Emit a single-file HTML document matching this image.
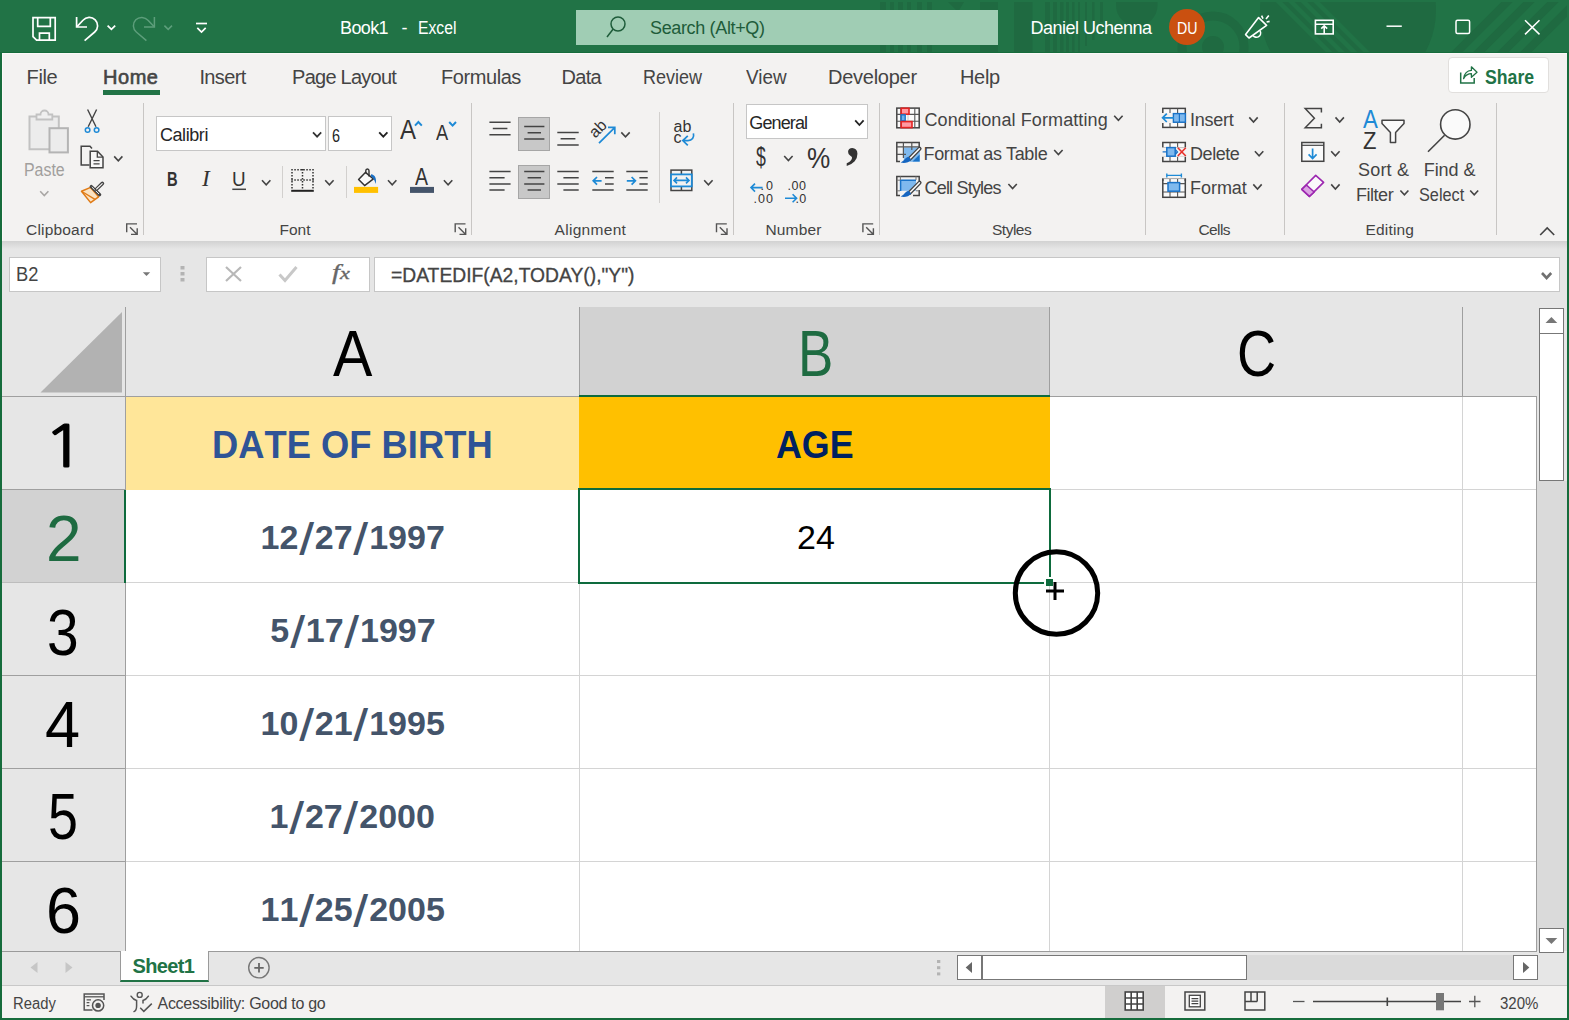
<!DOCTYPE html>
<html lang="en">
<head>
<meta charset="utf-8">
<title>Book1 - Excel</title>
<style>
html,body{margin:0;padding:0;}
body{width:1569px;height:1020px;overflow:hidden;background:#e6e6e6;font-family:"Liberation Sans",sans-serif;color:#444;}
#win{position:absolute;left:0;top:0;width:1569px;height:1020px;overflow:hidden;background:#e6e6e6;}
.abs{position:absolute;}
.t{position:absolute;white-space:nowrap;line-height:1;font-size:18px;color:#444;}
.b{font-weight:bold;}
.w{color:#fff;}
.g{color:#217346;}
svg.ov{position:absolute;left:0;top:0;width:1569px;height:1020px;overflow:visible;}
/* regions */
#title{left:0;top:0;width:1569px;height:53px;background:#217346;}
#ribbon{left:2px;top:53px;width:1565px;height:188px;background:#f3f2f1;box-sizing:border-box;border-top:1px solid #fbf9f8;border-left:1px solid #fbf9f8;}
#shadow{left:2px;top:241px;width:1565px;height:8px;background:linear-gradient(#d2d2d2,#e6e6e6);}
#bl{left:0;top:52px;width:2px;height:968px;background:#166c3c;}
#br{left:1567px;top:52px;width:2px;height:968px;background:#166c3c;}
#bb{left:0;top:1018px;width:1569px;height:2px;background:#166c3c;}
.box{position:absolute;background:#fff;border:1px solid #c6c6c6;box-sizing:border-box;}
.sep{position:absolute;width:1px;background:#c8c6c4;}
/* grid */
.hl{position:absolute;height:1px;background:#d4d4d4;}
.vl{position:absolute;width:1px;background:#d4d4d4;}
.cell{position:absolute;}
.hdr{position:absolute;color:#000;line-height:1;white-space:nowrap;font-size:65px;transform-origin:0 0;}
.dt{font-kerning:none;position:absolute;white-space:nowrap;line-height:1;font-weight:bold;color:#44546a;font-size:34px;}
.sl{display:inline-block;width:16.5px;text-align:center;font-size:34px;line-height:0;vertical-align:-1px;letter-spacing:0;}
.sl i{display:inline-block;font-style:normal;transform:skewX(-9deg) scale(1.1,1.3);transform-origin:50% 0;}
</style>
</head>
<body>
<div id="win">
<!--TITLE-->
<div class="abs" id="title"></div>
<svg class="ov" viewBox="0 0 1569 1020">
<defs><clipPath id="tc"><rect x="0" y="2" width="1567" height="51"/></clipPath><clipPath id="dc"><circle cx="1348" cy="10" r="88"/></clipPath></defs>
<g clip-path="url(#tc)" fill="#1f6a41">
<rect x="880" y="2" width="6" height="51"/><rect x="890" y="2" width="4" height="51"/><rect x="898" y="2" width="5" height="51"/><rect x="907" y="2" width="4" height="51"/><rect x="917" y="2" width="5" height="51"/><rect x="927" y="2" width="5" height="51"/>
<path d="M948 2 H964 L958 12 Z"/><rect x="980" y="2" width="18" height="51"/>
<rect x="1014" y="2" width="18.5" height="51"/>
<rect x="1045" y="2" width="5" height="51"/><rect x="1053" y="2" width="4" height="51"/><rect x="1060" y="2" width="3.5" height="51"/><rect x="1066" y="2" width="3" height="51"/><rect x="1072" y="2" width="2.5" height="51"/><rect x="1078" y="2" width="2" height="51"/><rect x="1085" y="2" width="2" height="44"/><rect x="1092" y="2" width="2.5" height="38"/><rect x="1100" y="2" width="3" height="20"/>
<rect x="1116" y="-20" width="41.5" height="46" rx="20.7"/>
<circle cx="1213" cy="47" r="31" fill="none" stroke="#1f6a41" stroke-width="9"/>
<circle cx="1213" cy="47" r="11"/>
<circle cx="1348" cy="10" r="88"/>
</g>
<g clip-path="url(#tc)"><g clip-path="url(#dc)" stroke="#217346" stroke-width="4.5" fill="none">
<path d="M1274 -3 L1340 63 M1286.5 -3 L1352.5 63 M1299 -3 L1365 63 M1311.5 -3 L1377.5 63"/>
</g>
<g stroke="#1f6a41" stroke-width="8" fill="none">
<path d="M1447 62 L1513 -4 M1469 62 L1535 -4 M1493 62 L1559 -4 M1516 62 L1582 -4"/>
</g></g>
<!-- search box -->
<rect x="576" y="10" width="422" height="35" fill="#a0cdb4"/>
<circle cx="618" cy="24" r="7" fill="none" stroke="#1e5c3a" stroke-width="1.5"/>
<path d="M613 29.2 L607 37" stroke="#1e5c3a" stroke-width="1.5" fill="none"/>
<!-- QAT icons -->
<g stroke="#fff" stroke-width="1.7" fill="none">
<path d="M33 17.7 H55.2 V40.2 H36.6 L33 36.6 Z"/>
<path d="M37.7 17.7 V26.4 H50.3 V17.7"/>
<path d="M39.5 40.2 V33.2 H49.3 V40.2"/>
<path d="M76.6 17 V27 H87"/>
<path d="M77 26.6 L83 20.3 A8.3 8.3 0 1 1 94.7 32 L84.6 40.6"/>
<path d="M107.6 25.6 L111.4 29.4 L115.2 25.6"/>
<path d="M196 23.5 H207"/>
<path d="M197.3 27.8 L201.5 32 L205.7 27.8"/>
</g>
<g stroke="#5d9e7b" stroke-width="1.5" fill="none">
<path d="M154.4 17 V27 H144"/>
<path d="M154 26.6 L148 20.3 A8.3 8.3 0 1 0 136.3 32 L146.4 40.6"/>
<path d="M164.4 25.6 L168.2 29.4 L172 25.6"/>
</g>
<!-- avatar -->
<circle cx="1187" cy="27" r="18" fill="#ca5010"/>
<!-- coming soon megaphone -->
<g stroke="#fff" stroke-width="1.6" fill="none" stroke-linejoin="round">
<path d="M1258.6 17.6 L1266.6 25.4 L1249 38 L1245.6 34.6 Z"/>
<path d="M1253 35.3 A3.6 3.6 0 0 0 1260 31"/>
<path d="M1261.6 15.6 L1263 18.6 M1266 19 L1268.8 15.6 M1266.6 22 L1269.6 21.4"/>
</g>
<!-- ribbon display -->
<g stroke="#fff" stroke-width="1.6" fill="none">
<rect x="1315.4" y="20.3" width="17.8" height="13.6"/>
<path d="M1315.4 24.2 H1333.2 M1324.2 34 V26.4 M1321.2 28.6 L1324.2 25.8 L1327.2 28.6"/>
</g>
<!-- window controls -->
<g stroke="#fff" stroke-width="1.5" fill="none">
<path d="M1386.5 26.2 H1401.8"/>
<rect x="1456" y="20.2" width="13.6" height="13.4" rx="1.5"/>
<path d="M1525 20.2 L1539.5 34.4 M1539.5 20.2 L1525 34.4"/>
</g>
</svg>
<div class="t w" id="t1" style="left:340.0px;top:19.0px;font-size:18px;letter-spacing:-0.63px;">Book1</div>
<div class="t w" id="t1b" style="left:401.5px;top:19.0px;font-size:18px;">-</div>
<div class="t w" id="t1c" style="left:417.6px;top:19.0px;font-size:18px;transform:scaleX(0.873);transform-origin:0 0;">Excel</div>
<div class="t" id="t2" style="left:650.0px;top:19.0px;font-size:18px;color:#1e5c3a;letter-spacing:-0.35px;">Search (Alt+Q)</div>
<div class="t w" id="t3" style="left:1030.5px;top:19.0px;font-size:18px;letter-spacing:-0.50px;">Daniel Uchenna</div>
<div class="t w" id="t4" style="left:1176.5px;top:20.5px;font-size:16px;transform:scaleX(0.887);transform-origin:0 0;">DU</div>
<div class="abs" style="left:0;top:52px;width:1569px;height:1px;background:#166c3c;"></div>
<!--RIBBON-->
<div class="abs" id="ribbon"></div>
<div class="abs" id="shadow"></div>
<!-- tabs -->
<div class="t" id="tb0" style="left:26.5px;top:66.9px;font-size:20px;letter-spacing:-0.33px;">File</div>
<div class="t" id="tb1" style="-webkit-text-stroke:0.6px #444;left:103.0px;top:66.9px;font-size:20px;letter-spacing:0.54px;">Home</div>
<div class="t" id="tb2" style="left:199.4px;top:66.9px;font-size:20px;letter-spacing:-0.60px;">Insert</div>
<div class="t" id="tb3" style="left:292.1px;top:66.9px;font-size:20px;letter-spacing:-0.76px;">Page Layout</div>
<div class="t" id="tb4" style="left:441.0px;top:66.9px;font-size:20px;letter-spacing:-0.43px;">Formulas</div>
<div class="t" id="tb5" style="left:561.5px;top:66.9px;font-size:20px;letter-spacing:-0.67px;">Data</div>
<div class="t" id="tb6" style="left:643.1px;top:66.9px;font-size:20px;transform:scaleX(0.900);transform-origin:0 0;">Review</div>
<div class="t" id="tb7" style="left:745.5px;top:66.9px;font-size:20px;transform:scaleX(0.943);transform-origin:0 0;">View</div>
<div class="t" id="tb8" style="left:828.0px;top:66.9px;font-size:20px;letter-spacing:-0.26px;">Developer</div>
<div class="t" id="tb9" style="left:960.0px;top:66.9px;font-size:20px;letter-spacing:-0.33px;">Help</div>
<div class="abs" style="left:103px;top:90px;width:57px;height:5px;background:#217346;"></div>
<div class="abs" style="left:1448px;top:57px;width:101px;height:36px;box-sizing:border-box;background:#fff;border:1px solid #e1dfdd;border-radius:4px;"></div>
<div class="t b g" id="tbs" style="left:1485.0px;top:67.2px;font-size:20px;transform:scaleX(0.883);transform-origin:0 0;">Share</div>
<!-- group separators -->
<div class="sep" style="left:143px;top:103px;height:132px;"></div>
<div class="sep" style="left:471px;top:103px;height:132px;"></div>
<div class="sep" style="left:733px;top:103px;height:132px;"></div>
<div class="sep" style="left:879px;top:103px;height:132px;"></div>
<div class="sep" style="left:1145px;top:103px;height:132px;"></div>
<div class="sep" style="left:1284px;top:103px;height:132px;"></div>
<div class="sep" style="left:1496px;top:103px;height:132px;"></div>
<div class="sep" style="left:282px;top:166px;height:32px;background:#d2d0ce;"></div>
<div class="sep" style="left:346px;top:166px;height:32px;background:#d2d0ce;"></div>
<div class="sep" style="left:659px;top:112px;height:91px;background:#d2d0ce;"></div>
<!-- combos -->
<div class="box" style="left:156px;top:116px;width:170px;height:35px;"></div>
<div class="box" style="left:328px;top:116px;width:64px;height:35px;"></div>
<div class="box" style="left:746px;top:104px;width:122px;height:35px;"></div>
<!-- selected align buttons -->
<div class="abs" style="left:518px;top:117px;width:32px;height:34px;box-sizing:border-box;background:#c8c8c8;border:1px solid #a6a6a6;"></div>
<div class="abs" style="left:518px;top:165px;width:32px;height:34px;box-sizing:border-box;background:#c8c8c8;border:1px solid #a6a6a6;"></div>
<!-- ribbon text -->
<div class="t" id="x1" style="left:23.9px;top:162.2px;font-size:17.5px;color:#a19f9d;transform:scaleX(0.910);transform-origin:0 0;">Paste</div>
<div class="t" id="x2" style="left:159.9px;top:126.1px;color:#262626;letter-spacing:-0.42px;">Calibri</div>
<div class="t" id="x3" style="left:332.0px;top:127.1px;color:#262626;transform:scale(0.803,1.000);transform-origin:0 0;">6</div>
<div class="t" id="x4" style="left:749.3px;top:113.8px;color:#262626;letter-spacing:-0.88px;">General</div>
<div class="t" id="x5" style="left:924.5px;top:111.2px;letter-spacing:0.10px;">Conditional Formatting</div>
<div class="t" id="x6" style="left:923.5px;top:145.2px;letter-spacing:-0.32px;">Format as Table</div>
<div class="t" id="x7" style="left:924.5px;top:179.1px;letter-spacing:-0.80px;">Cell Styles</div>
<div class="t" id="x8" style="left:1190.0px;top:111.2px;letter-spacing:-0.24px;">Insert</div>
<div class="t" id="x9" style="left:1190.0px;top:145.2px;letter-spacing:-0.44px;">Delete</div>
<div class="t" id="x10" style="left:1190.0px;top:179.1px;letter-spacing:-0.04px;">Format</div>
<div class="t" id="x11" style="left:1357.9px;top:160.5px;letter-spacing:0.24px;">Sort &amp;</div>
<div class="t" id="x12" style="left:1355.9px;top:185.7px;letter-spacing:-0.44px;">Filter</div>
<div class="t" id="x13" style="left:1423.7px;top:160.5px;letter-spacing:-0.04px;">Find &amp;</div>
<div class="t" id="x14" style="left:1418.5px;top:185.7px;transform:scaleX(0.904);transform-origin:0 0;">Select</div>
<!-- group labels -->
<div class="t" id="g1" style="left:26.0px;top:221.5px;font-size:15.5px;letter-spacing:0.19px;">Clipboard</div>
<div class="t" id="g2" style="left:279.5px;top:221.5px;font-size:15.5px;letter-spacing:-0.00px;">Font</div>
<div class="t" id="g3" style="left:554.5px;top:221.5px;font-size:15.5px;letter-spacing:0.31px;">Alignment</div>
<div class="t" id="g4" style="left:765.4px;top:221.5px;font-size:15.5px;letter-spacing:0.20px;">Number</div>
<div class="t" id="g5" style="left:992.0px;top:221.5px;font-size:15.5px;letter-spacing:-0.50px;">Styles</div>
<div class="t" id="g6" style="left:1198.5px;top:221.5px;font-size:15.5px;letter-spacing:-0.62px;">Cells</div>
<div class="t" id="g7" style="left:1365.5px;top:221.5px;font-size:15.5px;letter-spacing:0.17px;">Editing</div>
<!-- B I U etc -->
<div class="t b" id="f1" style="left:167.0px;top:168.5px;font-size:19.5px;color:#333;transform:scale(0.755,1.073);transform-origin:0 0;">B</div>
<div class="t" id="f2" style="left:202.2px;top:167.5px;font-size:21px;font-family:'Liberation Serif',serif;font-style:italic;color:#333;transform:scale(1.111,1.074);transform-origin:0 0;">I</div>
<div class="t" id="f3" style="left:232.4px;top:169.7px;font-size:19.5px;color:#333;transform:scale(0.966,1.014);transform-origin:0 0;">U</div>
<div class="t" id="f4" style="left:399.8px;top:117.4px;font-size:27px;color:#333;transform:scale(0.890,1.016);transform-origin:0 0;">A</div>
<div class="t" id="f5" style="left:436.4px;top:121.8px;font-size:22.5px;color:#333;transform:scale(0.812,1.000);transform-origin:0 0;">A</div>
<div class="t" id="f6" style="left:415.2px;top:166.2px;font-size:22px;color:#333;transform:scale(0.889,1.081);transform-origin:0 0;">A</div>
<div class="t" id="n1" style="left:756.0px;top:142.1px;font-size:26px;color:#333;transform:scale(0.681,1.097);transform-origin:0 0;">$</div>
<div class="t" id="n2" style="left:806.9px;top:143.2px;font-size:28px;color:#333;transform:scale(0.935,1.077);transform-origin:0 0;">%</div>
<div class="t b" id="n3" style="left:846.3px;top:107.2px;font-size:38px;font-family:'Liberation Serif',serif;color:#333;transform:scale(1.419,1.567);transform-origin:0 0;">,</div>
<svg class="ov" viewBox="0 0 1569 1020">
<g><path d="M29.5 116.6 H58.8 V149.3 H29.5 Z" fill="#ececec" stroke="#c2c2c2" stroke-width="2"/><path d="M36.5 119.5 V114.5 H40.5 A4 4 0 0 1 48.5 114.5 H52.3 V119.5 Z" fill="#efefef" stroke="#c2c2c2" stroke-width="1.8"/><rect x="49.5" y="128.2" width="18.4" height="24.2" fill="#ececec" stroke="#b4b4b4" stroke-width="2"/></g>
<path d="M40.2 191.3 l4.1 4.2 l4.1 -4.2" stroke="#a8a6a4" stroke-width="1.6" fill="none"/>
<path d="M87.6 109.5 L96 126.8 M96.6 109.5 L88.2 126.8" stroke="#444" stroke-width="1.4" fill="none"/><circle cx="87.6" cy="130" r="2.3" fill="none" stroke="#1e8ad6" stroke-width="1.5"/><circle cx="96.6" cy="130" r="2.3" fill="none" stroke="#1e8ad6" stroke-width="1.5"/>
<path d="M89.5 165 H81.2 V146.3 H90 L92 148.5" stroke="#444" stroke-width="1.5" fill="none"/><path d="M90.2 151.3 H97.5 L103 157 V167.8 H90.2 Z" fill="#f8f8f8" stroke="#444" stroke-width="1.5"/><path d="M97.3 151.5 V157.2 H103" stroke="#444" stroke-width="1.3" fill="none"/><path d="M93.5 160.6 H99.6 M93.5 163.8 H99.6" stroke="#444" stroke-width="1.2" fill="none"/>
<path d="M114.2 156.4 l4.1 4.4 l4.1 -4.4" stroke="#444" stroke-width="1.6" fill="none"/>
<path d="M81.5 191.3 L90.6 187.4 L98.6 196.8 L90.6 202.6 Z" fill="#fbe3c3" stroke="#e07b16" stroke-width="1.5" stroke-linejoin="round"/><path d="M81.5 191.3 L95 199.4" stroke="#e07b16" stroke-width="1.3" fill="none"/><path d="M91.3 186.6 L99.6 194.6" stroke="#444" stroke-width="3.4" fill="none" stroke-linecap="round"/><path d="M91.8 187 L99 194" stroke="#f3f2f1" stroke-width="1" fill="none"/><path d="M96.4 189.2 L102.4 183.4" stroke="#444" stroke-width="3.6" fill="none" stroke-linecap="round"/><path d="M96.6 189 L102.2 183.6" stroke="#f8f8f8" stroke-width="1.1" fill="none" stroke-linecap="round"/>
<path d="M137.0 223.9 H126.7 V232.2" stroke="#555" stroke-width="1.4" fill="none"/><path d="M130.0 227.2 L137.0 234.2 M131.0 234.4 H137.2 V228.2" stroke="#555" stroke-width="1.4" fill="none"/>
<path d="M313.0 132.3 l4.1 4.4 l4.1 -4.4" stroke="#333" stroke-width="1.7" fill="none"/>
<path d="M379.2 132.3 l4.1 4.4 l4.1 -4.4" stroke="#222" stroke-width="1.8" fill="none"/>
<path d="M415 125.6 l3.4 -3.6 l3.4 3.6" stroke="#1e8ad6" stroke-width="2" fill="none"/>
<path d="M449.2 122 l3.4 3.6 l3.4 -3.6" stroke="#1e8ad6" stroke-width="2" fill="none"/>
<path d="M232.3 189.3 H246" stroke="#444" stroke-width="1.5"/>
<path d="M262.0 180.2 l4.2 4.6 l4.2 -4.6" stroke="#444" stroke-width="1.6" fill="none"/>
<g stroke="#333" stroke-width="1.5" fill="none" stroke-dasharray="1.5 1.5"><path d="M291.3 169.7 H313.8 M292 169 V190 M313 169 V190 M302.5 169 V190 M291.3 180 H313.8"/></g><path d="M291.2 190.8 H313.8" stroke="#222" stroke-width="2"/>
<path d="M325.2 180.2 l4.2 4.6 l4.2 -4.6" stroke="#444" stroke-width="1.6" fill="none"/>
<path d="M358.6 179.4 L365.4 172.4 L373.4 178.9 L364.6 185.6 Z" fill="#fafafa" stroke="#333" stroke-width="1.5" stroke-linejoin="round"/><path d="M365.8 173.5 V170.8 A1.6 1.8 0 0 1 369 170.8 V176.6" stroke="#333" stroke-width="1.4" fill="none"/><path d="M371 174.3 C375 174.5 377 179 375.6 184 C374.5 180 373.5 178 371 176.5 Z" fill="#1a6fc4"/><rect x="354" y="186.9" width="24.1" height="6" fill="#ffc000"/>
<path d="M388.0 180.2 l4.2 4.6 l4.2 -4.6" stroke="#444" stroke-width="1.6" fill="none"/>
<rect x="410" y="186.9" width="24" height="6" fill="#44546a"/>
<path d="M443.9 180.2 l4.2 4.6 l4.2 -4.6" stroke="#444" stroke-width="1.6" fill="none"/>
<path d="M465.5 223.9 H455.2 V232.2" stroke="#555" stroke-width="1.4" fill="none"/><path d="M458.5 227.2 L465.5 234.2 M459.5 234.4 H465.7 V228.2" stroke="#555" stroke-width="1.4" fill="none"/>
<path d="M489.4 122.2 H510.6 M492.8 128.4 H507.4 M489.4 134.7 H510.6 " stroke="#444" stroke-width="1.5" fill="none"/>
<path d="M524.2 126.5 H544.4 M527.6 132.7 H541.0 M524.2 139.0 H544.4 " stroke="#444" stroke-width="1.5" fill="none"/>
<path d="M557.3 132.6 H578.7 M560.6 138.8 H575.4 M557.3 145.1 H578.7 " stroke="#444" stroke-width="1.5" fill="none"/>
<path d="M489.4 171.6 H510.6 M489.4 177.8 H504.6 M489.4 183.9 H510.6 M489.4 190.1 H504.6 " stroke="#444" stroke-width="1.5" fill="none"/>
<path d="M524.2 171.6 H544.4 M527.6 177.8 H541.0 M524.2 183.9 H544.4 M527.6 190.1 H541.0 " stroke="#444" stroke-width="1.5" fill="none"/>
<path d="M557.3 171.6 H578.7 M563.4 177.8 H578.7 M557.3 183.9 H578.7 M563.4 190.1 H578.7 " stroke="#444" stroke-width="1.5" fill="none"/>
<path d="M592.3 171.6 H613.7 M605.0 177.8 H613.7 M605.0 183.9 H613.7 M592.3 190.1 H613.7 " stroke="#444" stroke-width="1.5" fill="none"/>
<path d="M593.2 180.8 H601.6 M597 177 L593.2 180.8 L597 184.6" stroke="#1e8ad6" stroke-width="1.7" fill="none"/>
<path d="M626.3 171.6 H647.7 M639.4 177.8 H647.7 M639.4 183.9 H647.7 M626.3 190.1 H647.7 " stroke="#444" stroke-width="1.5" fill="none"/>
<path d="M626.8 180.8 H635.4 M631.6 177 L635.4 180.8 L631.6 184.6" stroke="#1e8ad6" stroke-width="1.7" fill="none"/>
<path d="M599 143.2 L614.4 127.8 M608 127.4 H614.8 V134.2" stroke="#1e8ad6" stroke-width="1.7" fill="none"/>
<path d="M621.3 132.4 l4.2 4.4 l4.2 -4.4" stroke="#444" stroke-width="1.6" fill="none"/>
<path d="M693.4 133.4 C694.5 137.5 692 140.6 688 140.6 H683 M687.8 135.8 L682.8 140.6 L687.8 145.4" stroke="#1e8ad6" stroke-width="1.7" fill="none"/>
<rect x="671" y="170.1" width="20.8" height="20.4" fill="none" stroke="#444" stroke-width="1.5"/><path d="M681.4 170 V174 M681.4 187 V191" stroke="#444" stroke-width="1.5"/><rect x="671" y="174.4" width="20.8" height="12" fill="#f3f2f1" stroke="#1e8ad6" stroke-width="1.8"/><path d="M674 180.4 H689 M677 177.4 L674 180.4 L677 183.4 M686 177.4 L689 180.4 L686 183.4" stroke="#1e8ad6" stroke-width="1.6" fill="none"/>
<path d="M704.2 180.2 l4.2 4.6 l4.2 -4.6" stroke="#444" stroke-width="1.6" fill="none"/>
<path d="M726.8 223.9 H716.5 V232.2" stroke="#555" stroke-width="1.4" fill="none"/><path d="M719.8 227.2 L726.8 234.2 M720.8 234.4 H727.0 V228.2" stroke="#555" stroke-width="1.4" fill="none"/>
<path d="M855.2 120.4 l4.2 4.6 l4.2 -4.6" stroke="#222" stroke-width="1.8" fill="none"/>
<path d="M784.2 156.0 l4.2 4.6 l4.2 -4.6" stroke="#444" stroke-width="1.6" fill="none"/>
<path d="M751 187.6 H762.6 M755 183.6 L751 187.6 L755 191.6" stroke="#1e8ad6" stroke-width="1.6" fill="none"/>
<path d="M785 198.2 H796.6 M792.6 194.2 L796.6 198.2 L792.6 202.2" stroke="#1e8ad6" stroke-width="1.6" fill="none"/>
<path d="M873.2 223.9 H862.9 V232.2" stroke="#555" stroke-width="1.4" fill="none"/><path d="M866.2 227.2 L873.2 234.2 M867.2 234.4 H873.4 V228.2" stroke="#555" stroke-width="1.4" fill="none"/>
<g><rect x="896.8" y="108.1" width="22.4" height="19.7" fill="#fafafa" stroke="#444" stroke-width="1.5"/><path d="M900.8 108 V128 M914.8 108 V128 M896.8 114.4 H919.2 M896.8 121.2 H919.2" stroke="#555" stroke-width="1.1" fill="none"/><path d="M908 108 V128" stroke="#c8c8c8" stroke-width="1" fill="none"/><rect x="901.2" y="108.2" width="7.8" height="6" fill="#ff9aa2" stroke="#e32424" stroke-width="1.6"/><rect x="901.2" y="114.8" width="4" height="6" fill="#6fb1ea" stroke="#1a73c8" stroke-width="1.4"/><rect x="901.2" y="121.6" width="10.8" height="6" fill="#ff9aa2" stroke="#e32424" stroke-width="1.6"/></g>
<g><path d="M919.2 148 V142.4 H896.8 V161.4 H900" stroke="#444" stroke-width="1.5" fill="none"/><rect x="903.8" y="147.4" width="16" height="14.4" fill="#7fb9ee"/><path d="M903.4 142.4 V158 M911.8 142.4 V150 M896.8 146.8 H919.2 M896.8 154.4 H906" stroke="#555" stroke-width="1.2" fill="none"/><path d="M912.5 161.6 L919.6 154.5 V161.6 Z" fill="#1a73c8"/><g transform="translate(0,0)"><path d="M919.6 148.6 L909.4 159" stroke="#444" stroke-width="4" stroke-linecap="round" fill="none"/><path d="M919.4 148.8 L910.4 158" stroke="#fafafa" stroke-width="1.6" stroke-linecap="round" fill="none"/><path d="M900.6 162.6 C904 163.6 909 163 911.2 159.6 L908.4 156.8 C905 157.5 904.5 161 900.6 162.6 Z" fill="#1565c0"/></g></g>
<g><path d="M919.2 181 V176.4 H896.8 V195.6 H900 M913 195.6 H919.2 V190" stroke="#444" stroke-width="1.5" fill="none"/><rect x="900.6" y="180.2" width="15.4" height="10.6" fill="#7fb9ee"/><path d="M900.6 191 V180.2 H916" stroke="#1a73c8" stroke-width="1.5" fill="none"/><path d="M900.4 176.4 V180 M916 176.4 V180 M896.8 180.2 H900 M896.8 190.8 H900 M916 190.8 H919.2" stroke="#777" stroke-width="1" fill="none"/><g transform="translate(0,34)"><path d="M919.6 148.6 L909.4 159" stroke="#444" stroke-width="4" stroke-linecap="round" fill="none"/><path d="M919.4 148.8 L910.4 158" stroke="#fafafa" stroke-width="1.6" stroke-linecap="round" fill="none"/><path d="M900.6 162.6 C904 163.6 909 163 911.2 159.6 L908.4 156.8 C905 157.5 904.5 161 900.6 162.6 Z" fill="#1565c0"/></g></g>
<path d="M1114.2 115.8 l4.2 4.6 l4.2 -4.6" stroke="#444" stroke-width="1.6" fill="none"/>
<path d="M1054.2 150.0 l4.2 4.6 l4.2 -4.6" stroke="#444" stroke-width="1.6" fill="none"/>
<path d="M1008.4 184.0 l4.2 4.6 l4.2 -4.6" stroke="#444" stroke-width="1.6" fill="none"/>
<g><rect x="1162.8" y="108.4" width="22.5" height="19" fill="#fafafa" stroke="#444" stroke-width="1.5"/><path d="M1170 108.4 V127.4 M1177.6 108.4 V127.4 M1162.8 113.7 H1185.3 M1162.8 122.1 H1185.3" stroke="#555" stroke-width="1.1" fill="none"/><rect x="1161" y="113" width="12" height="10" fill="#f3f2f1"/><rect x="1173.4" y="113.6" width="12" height="8.6" fill="#7fb9ee" stroke="#1a73c8" stroke-width="1.4"/><path d="M1179.4 113.6 V122.2" stroke="#1a73c8" stroke-width="1.2"/><path d="M1162.6 117.8 H1174 M1166.8 113.6 L1162.6 117.8 L1166.8 122" stroke="#1e8ad6" stroke-width="1.7" fill="none"/></g>
<g><rect x="1162.8" y="142.5" width="22.5" height="19" fill="#fafafa" stroke="#444" stroke-width="1.5"/><path d="M1170 142.5 V161.5 M1177.6 142.5 V161.5 M1162.8 147.8 H1185.3 M1162.8 156.2 H1185.3" stroke="#555" stroke-width="1.1" fill="none"/><rect x="1161" y="147.4" width="26" height="9.4" fill="#f3f2f1"/><rect x="1166.8" y="147.6" width="8.4" height="8.6" fill="#7fb9ee" stroke="#1a73c8" stroke-width="1.5"/><path d="M1162.6 151.9 H1166.6 M1175.4 149.6 L1177.4 151.9 L1175.4 154.2" stroke="#1a73c8" stroke-width="1.4" fill="none"/><path d="M1177.8 147.8 L1185.8 156 M1185.8 147.8 L1177.8 156" stroke="#e8302a" stroke-width="1.6" fill="none"/></g>
<g><rect x="1162.8" y="178.3" width="22.5" height="19" fill="#fafafa" stroke="#444" stroke-width="1.5"/><path d="M1170 178.3 V197.3 M1177.6 178.3 V197.3 M1162.8 183.6 H1185.3 M1162.8 192.0 H1185.3" stroke="#555" stroke-width="1.1" fill="none"/><rect x="1160" y="174" width="28" height="4.6" fill="#f3f2f1"/><path d="M1162.8 178.6 V181 M1185.3 178.6 V181" stroke="#444" stroke-width="1.5"/><rect x="1168" y="182.6" width="11.6" height="8.6" fill="#7fb9ee" stroke="#1a73c8" stroke-width="1.5"/><path d="M1166.8 175.4 H1181.4 M1166.8 173.4 V177.4 M1181.4 173.4 V177.4" stroke="#1e8ad6" stroke-width="1.4" fill="none"/></g>
<path d="M1249.3 117.4 l4.2 4.6 l4.2 -4.6" stroke="#444" stroke-width="1.6" fill="none"/>
<path d="M1254.9 151.2 l4.2 4.6 l4.2 -4.6" stroke="#444" stroke-width="1.6" fill="none"/>
<path d="M1253.3 184.4 l4.2 4.6 l4.2 -4.6" stroke="#444" stroke-width="1.6" fill="none"/>
<path d="M1321.4 112.4 V108.5 H1305.2 L1314.4 118.2 L1305.2 127.8 H1321.4 V123.8" stroke="#444" stroke-width="1.5" fill="none"/>
<path d="M1335.5 117.4 l4.2 4.6 l4.2 -4.6" stroke="#444" stroke-width="1.6" fill="none"/>
<rect x="1301.8" y="142.5" width="22" height="18.8" fill="#fafafa" stroke="#444" stroke-width="1.5"/><path d="M1301.8 145.3 H1323.8" stroke="#444" stroke-width="1.2"/><path d="M1312.6 148.6 V158.4 M1308.6 154.4 L1312.6 158.6 L1316.6 154.4" stroke="#1e8ad6" stroke-width="1.7" fill="none"/>
<path d="M1331.2 151.2 l4.2 4.6 l4.2 -4.6" stroke="#444" stroke-width="1.6" fill="none"/>
<path d="M1315.7 175.4 L1323.6 182.4 L1309.4 196.4 L1301.8 189.3 Z" fill="#fafafa" stroke="#9c27b0" stroke-width="1.6" stroke-linejoin="round"/><path d="M1306.4 185 L1314.2 192 L1309.4 196.4 L1301.8 189.3 Z" fill="#dba3e3" stroke="#9c27b0" stroke-width="1.6" stroke-linejoin="round"/>
<path d="M1331.2 184.4 l4.2 4.6 l4.2 -4.6" stroke="#444" stroke-width="1.6" fill="none"/>
<path d="M1382 120.3 H1404 V123.6 L1395.6 132.6 V142.4 H1390.4 V132.6 L1382 123.6 Z" fill="#fafafa" stroke="#444" stroke-width="1.5" stroke-linejoin="round"/>
<circle cx="1455.3" cy="124.4" r="14.7" fill="#fafafa" stroke="#444" stroke-width="1.6"/><path d="M1444.6 135.2 L1428 151.8" stroke="#444" stroke-width="1.6"/>
<path d="M1400.4 190.5 l4.0 4.4 l4.0 -4.4" stroke="#444" stroke-width="1.6" fill="none"/>
<path d="M1470.2 190.5 l4.0 4.4 l4.0 -4.4" stroke="#444" stroke-width="1.6" fill="none"/>
<path d="M1540.2 235 L1547.2 228 L1554.2 235" stroke="#444" stroke-width="1.6" fill="none"/>
<path d="M1460.7 72.4 V83 H1474.2 V78" stroke="#217346" stroke-width="1.5" fill="none"/><path d="M1463.6 78.6 C1464.4 73.4 1467.6 70.6 1471.4 70.4 V66.8 L1477 72.2 L1471.4 77.2 V73.6 C1468.2 73.6 1465.6 75 1463.6 78.6 Z" fill="none" stroke="#217346" stroke-width="1.3" stroke-linejoin="round"/>
</svg>
<div class="t" id="o1" style="left:588.5px;top:120.5px;font-size:16px;transform:rotate(-45deg);transform-origin:50% 50%;color:#333;">ab</div>
<div class="t" id="w1" style="left:673.5px;top:118.8px;font-size:16px;color:#333;">ab</div>
<div class="t" id="w2" style="left:673.5px;top:129.6px;font-size:16px;color:#333;">c</div>
<div class="t" id="d1" style="left:760.5px;top:179.5px;font-size:12.5px;color:#333;letter-spacing:2.00px;">.0</div>
<div class="t" id="d2" style="left:753.5px;top:192.5px;font-size:12.5px;color:#333;letter-spacing:1.00px;">.00</div>
<div class="t" id="d3" style="left:787.5px;top:179.5px;font-size:12.5px;color:#333;letter-spacing:0.60px;">.00</div>
<div class="t" id="d4" style="left:795.5px;top:192.5px;font-size:12.5px;color:#333;letter-spacing:0.20px;">.0</div>
<div class="t" id="e1" style="left:1363.0px;top:106.0px;font-size:26px;color:#1e8ad6;transform:scale(0.857,1.000);transform-origin:0 0;">A</div>
<div class="t" id="e2" style="left:1362.8px;top:127.8px;font-size:25px;color:#333;transform:scale(0.882,0.990);transform-origin:0 0;">Z</div>
<!--FORMULA-->
<div class="box" style="left:9px;top:257px;width:152px;height:35px;"></div>
<div class="box" style="left:206px;top:257px;width:164px;height:35px;"></div>
<div class="box" style="left:374px;top:257px;width:1186px;height:35px;"></div>
<div class="t" id="nb" style="left:15.8px;top:265.4px;font-size:19.3px;transform:scaleX(0.950);transform-origin:0 0;">B2</div>
<div class="t" id="fx" style="left:332.1px;top:261.2px;font-size:23px;font-family:'Liberation Serif',serif;font-style:italic;color:#666;-webkit-text-stroke:0.4px #666;transform:scale(1.134,0.873);transform-origin:0 0;"><span style="font-size:25px">f</span><span style="font-size:19.5px">x</span></div>
<div class="t" id="fm" style="left:391.0px;top:265.5px;font-size:19.3px;-webkit-text-stroke:0.3px #444;letter-spacing:0.00px;">=DATEDIF(A2,TODAY(),"Y")</div>
<svg class="ov" viewBox="0 0 1569 1020">
<path d="M142.8 272.3 L150.2 272.3 L146.5 276 Z" fill="#777"/>
<rect x="180.5" y="266" width="4" height="3.5" fill="#b3b3b3"/><rect x="180.5" y="272" width="4" height="3.5" fill="#b3b3b3"/><rect x="180.5" y="278" width="4" height="3.5" fill="#b3b3b3"/>
<path d="M226 267 L241 281 M241 267 L226 281" stroke="#b8b8b8" stroke-width="2.2" fill="none"/>
<path d="M279.5 274.5 L285 280.5 L296.5 267" stroke="#c8c8c8" stroke-width="3" fill="none"/>
<path d="M1542 273 L1546.6 278 L1551.2 273" stroke="#707070" stroke-width="2.6" fill="none"/>
</svg>
<!--GRID-->
<div class="abs" style="left:2px;top:300px;width:1565px;height:651px;background:#e6e6e6;"></div>
<!-- cells area -->
<div class="abs" style="left:126px;top:397px;width:1411px;height:554px;background:#fff;"></div>
<div class="cell" style="left:126px;top:397px;width:453px;height:93px;background:#ffe699;"></div>
<div class="cell" style="left:579px;top:397px;width:471px;height:93px;background:#ffc000;"></div>
<!-- selected headers -->
<div class="abs" style="left:579px;top:307px;width:470px;height:89px;background:#d2d2d2;"></div>
<div class="abs" style="left:2px;top:490px;width:123px;height:92px;background:#d2d2d2;"></div>
<!-- gridlines -->
<div class="hl" style="left:1050px;top:489px;width:487px;"></div>
<div class="hl" style="left:126px;top:582px;width:1411px;"></div>
<div class="hl" style="left:126px;top:675px;width:1411px;"></div>
<div class="hl" style="left:126px;top:768px;width:1411px;"></div>
<div class="hl" style="left:126px;top:861px;width:1411px;"></div>
<div class="vl" style="left:579px;top:490px;height:461px;"></div>
<div class="vl" style="left:1049px;top:490px;height:461px;"></div>
<div class="vl" style="left:1462px;top:397px;height:554px;"></div>
<!-- header lines -->
<div class="hl" style="left:2px;top:396px;width:1535px;background:#9f9f9f;"></div>
<div class="vl" style="left:125px;top:307px;height:644px;background:#9f9f9f;"></div>
<div class="vl" style="left:579px;top:307px;height:89px;background:#9f9f9f;"></div>
<div class="vl" style="left:1049px;top:307px;height:89px;background:#9f9f9f;"></div>
<div class="vl" style="left:1462px;top:307px;height:89px;background:#9f9f9f;"></div>
<div class="vl" style="left:1536px;top:397px;height:554px;background:#9f9f9f;"></div>
<div class="hl" style="left:2px;top:489px;width:123px;background:#9f9f9f;"></div>
<div class="hl" style="left:2px;top:582px;width:123px;background:#bdbdbd;"></div>
<div class="hl" style="left:2px;top:675px;width:123px;background:#9f9f9f;"></div>
<div class="hl" style="left:2px;top:768px;width:123px;background:#9f9f9f;"></div>
<div class="hl" style="left:2px;top:861px;width:123px;background:#9f9f9f;"></div>
<!-- green accents on selected headers -->
<div class="abs" style="left:579px;top:395px;width:471px;height:2px;background:#0e6b3d;"></div>
<div class="abs" style="left:124px;top:490px;width:2px;height:93px;background:#0e6b3d;"></div>
<!-- selection -->
<div class="abs" style="left:578px;top:488px;width:473px;height:96px;box-sizing:border-box;border:2px solid #0e6b3d;"></div>
<div class="abs" style="left:1044px;top:577px;width:9px;height:9px;background:#fff;"></div>
<div class="abs" style="left:1046px;top:579px;width:7px;height:7px;background:#0e6b3d;"></div>
<!-- column letters -->
<div class="hdr" id="hA" style="left:333.0px;top:321.4px;transform:scaleX(0.908);transform-origin:0 0;">A</div>
<div class="hdr" id="hB" style="left:797.9px;top:321.4px;color:#1e6b41;transform:scaleX(0.814);transform-origin:0 0;">B</div>
<div class="hdr" id="hC" style="left:1236.5px;top:321.0px;transform:scaleX(0.833);transform-origin:0 0;">C</div>
<!-- row numbers -->
<div class="hdr" id="r1" style="left:43.0px;top:417.4px;font-family:'NanumGothic','Liberation Sans',sans-serif;font-size:62px;-webkit-text-stroke:1.3px #000;transform:scale(1.125,0.938);transform-origin:0 0;">1</div>
<div class="hdr" id="r2" style="left:45.5px;top:506.0px;color:#1e6b41;transform:scaleX(0.983);transform-origin:0 0;">2</div>
<div class="hdr" id="r3" style="left:46.7px;top:599.5px;transform:scaleX(0.875);transform-origin:0 0;">3</div>
<div class="hdr" id="r4" style="left:45.0px;top:691.5px;transform:scaleX(0.971);transform-origin:0 0;">4</div>
<div class="hdr" id="r5" style="left:48.4px;top:784.0px;transform:scaleX(0.828);transform-origin:0 0;">5</div>
<div class="hdr" id="r6" style="left:45.5px;top:878.0px;transform:scaleX(0.968);transform-origin:0 0;">6</div>
<!-- cell text -->
<div class="dt" id="a1" style="left:212.1px;top:425.4px;font-size:39px;color:#2f5496;transform:scaleX(0.932);transform-origin:0 0;">DATE OF BIRTH</div>
<div class="dt" id="b1" style="left:775.7px;top:425.0px;font-size:39px;color:#002060;transform:scaleX(0.918);transform-origin:0 0;">AGE</div>
<div class="dt" id="a2" style="left:260.5px;top:520px;">12<span class="sl"><i>/</i></span>27<span class="sl"><i>/</i></span>1997</div>
<div class="dt" id="b2" style="left:797px;top:520px;font-weight:normal;color:#000;">24</div>
<div class="dt" id="a3" style="left:270.3px;top:613px;">5<span class="sl"><i>/</i></span>17<span class="sl"><i>/</i></span>1997</div>
<div class="dt" id="a4" style="left:260.5px;top:706px;">10<span class="sl"><i>/</i></span>21<span class="sl"><i>/</i></span>1995</div>
<div class="dt" id="a5" style="left:269.5px;top:799px;">1<span class="sl"><i>/</i></span>27<span class="sl"><i>/</i></span>2000</div>
<div class="dt" id="a6" style="left:260.5px;top:892px;">11<span class="sl"><i>/</i></span>25<span class="sl"><i>/</i></span>2005</div>
<!-- corner triangle + cursor -->
<svg class="ov" viewBox="0 0 1569 1020">
<path d="M122 312 L122 392.5 L40.5 392.5 Z" fill="#b2b2b2"/>
<circle cx="1056.5" cy="593" r="41.2" fill="none" stroke="#000" stroke-width="5"/>
<path d="M1055 582 V600 M1046 591 H1064" stroke="#000" stroke-width="3" fill="none"/>
</svg>
<!-- vertical scrollbar -->
<div class="abs" style="left:1537px;top:481px;width:30px;height:470px;background:#dadada;"></div>
<div class="abs" style="left:1539px;top:308px;width:25px;height:26px;box-sizing:border-box;background:#fff;border:1px solid #777;"></div>
<div class="abs" style="left:1539px;top:333px;width:25px;height:148px;box-sizing:border-box;background:#fff;border:1px solid #777;"></div>
<div class="abs" style="left:1539px;top:928px;width:25px;height:25px;box-sizing:border-box;background:#fff;border:1px solid #777;"></div>
<svg class="ov" viewBox="0 0 1569 1020">
<path d="M1545.5 323 L1551.4 317 L1557.3 323 Z" fill="#777"/>
<path d="M1545.5 938 L1551.4 944 L1557.3 938 Z" fill="#777"/>
</svg>
<!--SHEETBAR-->
<div class="hl" style="left:2px;top:951px;width:1535px;background:#9a9a9a;"></div>
<div class="abs" style="left:120px;top:951px;width:89px;height:31px;background:#fff;box-sizing:border-box;border-bottom:2px solid #217346;border-right:1px solid #9a9a9a;border-left:1px solid #9a9a9a;"></div>
<div class="t b g" id="sh" style="left:132.6px;top:956px;font-size:20px;letter-spacing:-0.66px;">Sheet1</div>
<!-- h scroll -->
<div class="abs" style="left:982px;top:955px;width:555px;height:25px;background:#dadada;"></div>
<div class="abs" style="left:957px;top:955px;width:25px;height:25px;box-sizing:border-box;background:#fff;border:1px solid #777;"></div>
<div class="abs" style="left:981px;top:955px;width:266px;height:25px;box-sizing:border-box;background:#fff;border:1px solid #777;border-left:2px solid #777;"></div>
<div class="abs" style="left:1513px;top:955px;width:25px;height:25px;box-sizing:border-box;background:#fff;border:1px solid #777;"></div>
<svg class="ov" viewBox="0 0 1569 1020">
<path d="M37.5 962 L37.5 973 L30.5 967.5 Z" fill="#c6c6c6"/>
<path d="M65.5 962 L65.5 973 L72.5 967.5 Z" fill="#c6c6c6"/>
<circle cx="258.9" cy="967.7" r="10.2" fill="none" stroke="#777" stroke-width="1.4"/>
<path d="M254.3 967.8 H263.7 M259 963 V972.6" stroke="#666" stroke-width="1.8" fill="none"/>
<rect x="937" y="960" width="3.3" height="3" fill="#b3b3b3"/><rect x="937" y="966.2" width="3.3" height="3" fill="#b3b3b3"/><rect x="937" y="972.4" width="3.3" height="3" fill="#b3b3b3"/>
<path d="M972 962 L972 973 L965.7 967.5 Z" fill="#666"/>
<path d="M1523 962 L1523 973 L1529.3 967.5 Z" fill="#666"/>
</svg>
<!--STATUS-->
<div class="abs" style="left:2px;top:986px;width:1565px;height:32px;background:#f3f2f1;"></div>
<div class="hl" style="left:2px;top:985px;width:1565px;background:#c8c8c8;"></div>
<div class="abs" style="left:1105px;top:986px;width:60px;height:32px;background:#d0cfce;"></div>
<div class="t" id="s1" style="left:12.5px;top:996.0px;font-size:16px;transform:scaleX(0.925);transform-origin:0 0;">Ready</div>
<div class="t" id="s2" style="left:157.5px;top:996.0px;font-size:16px;letter-spacing:-0.29px;">Accessibility: Good to go</div>
<div class="t" id="s3" style="left:1499.6px;top:996.0px;font-size:16px;transform:scaleX(0.939);transform-origin:0 0;">320%</div>
<svg class="ov" viewBox="0 0 1569 1020">
<!-- macro record icon -->
<path d="M92.5 1010 H84.2 V994 H104 V1000" stroke="#555" stroke-width="1.5" fill="none"/>
<path d="M84.2 996.8 H104" stroke="#555" stroke-width="1.3" fill="none"/>
<path d="M86.6 999.8 H91 M86.6 1002.7 H89.4 M86.6 1005.6 H89.4" stroke="#555" stroke-width="1.3" fill="none"/>
<circle cx="98.1" cy="1005.4" r="5.6" fill="#f3f2f1" stroke="#555" stroke-width="1.5"/>
<circle cx="98.1" cy="1005.4" r="2.7" fill="#555"/>
<!-- accessibility icon -->
<circle cx="139.7" cy="994.9" r="2.5" fill="none" stroke="#555" stroke-width="1.4"/>
<path d="M131 996.2 C132.5 998.5 134.5 1000 136.6 1000.4 V1006 C136.6 1009 135.8 1011 134 1011.6 M148.4 996.2 C147 998.5 145 1000 143 1000.4 V1003" stroke="#555" stroke-width="1.5" fill="none" stroke-linecap="round"/>
<path d="M140.2 1007.8 L143.8 1011.4 L151.8 1003.6" stroke="#555" stroke-width="1.5" fill="none"/>
<!-- normal view -->
<rect x="1125.2" y="992" width="18" height="18" fill="#fff" stroke="#444" stroke-width="1.6"/>
<path d="M1131.2 992 V1010 M1137.2 992 V1010 M1125.2 998 H1143.2 M1125.2 1004 H1143.2" stroke="#444" stroke-width="1.6" fill="none"/>
<!-- page layout -->
<rect x="1185" y="992" width="19.8" height="18" fill="none" stroke="#444" stroke-width="1.5"/>
<rect x="1189.3" y="995.3" width="11" height="11.5" fill="#fff" stroke="#444" stroke-width="1.3"/>
<path d="M1191.5 998.7 H1198.3 M1191.5 1001.2 H1198.3 M1191.5 1003.7 H1198.3" stroke="#444" stroke-width="1.2" fill="none"/>
<!-- page break -->
<rect x="1245" y="992" width="19.8" height="18" fill="none" stroke="#444" stroke-width="1.5"/>
<path d="M1251 992 V1001.5 M1257.2 992 V1001.5 M1245 1001.5 H1257.2" stroke="#444" stroke-width="1.5" fill="none"/>
<!-- zoom slider -->
<path d="M1293 1001.5 H1304.5" stroke="#555" stroke-width="1.3"/>
<path d="M1313 1001.5 H1461" stroke="#444" stroke-width="1.6"/>
<path d="M1387.3 997.5 V1006" stroke="#444" stroke-width="1.6"/>
<rect x="1436" y="993" width="8" height="17.3" fill="#777"/>
<path d="M1469 1001.5 H1480.5 M1474.8 995.7 V1007.3" stroke="#555" stroke-width="1.3" fill="none"/>
</svg>
<div class="abs" id="bl"></div>
<div class="abs" id="br"></div>
<div class="abs" id="bb"></div>
</div>
</body>
</html>
